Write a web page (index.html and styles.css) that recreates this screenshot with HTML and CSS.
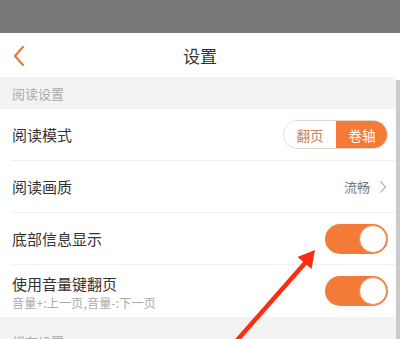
FILE: index.html
```html
<!DOCTYPE html>
<html lang="zh">
<head>
<meta charset="utf-8">
<link rel="stylesheet" href="styles.css">
</head>
<body>
<div class="page">
  <div class="status"></div>
  <div class="header">
    <svg class="back" width="14" height="22" viewBox="0 0 14 22"><polyline points="11,2 3,11 11,20" fill="none" stroke="#e07b39" stroke-width="2.2" stroke-linecap="round" stroke-linejoin="round"/></svg>
    <div class="title">设置</div>
  </div>
  <div class="main">
    <div class="content">
      <div class="section">阅读设置</div>
      <div class="list">
        <div class="row"><div class="row-inner">
          <span class="label">阅读模式</span>
          <div class="seg"><span class="seg-off">翻页</span><span class="seg-on">卷轴</span></div>
        </div></div>
        <div class="row"><div class="row-inner">
          <span class="label">阅读画质</span>
          <div class="value">流畅<svg class="chev" width="8" height="14" viewBox="0 0 8 14"><polyline points="1.5,1.5 6.5,7 1.5,12.5" fill="none" stroke="#b5b5b5" stroke-width="1.2"/></svg></div>
        </div></div>
        <div class="row"><div class="row-inner">
          <span class="label">底部信息显示</span>
          <div class="toggle"><div class="knob"></div></div>
        </div></div>
        <div class="row tall"><div class="row-inner last">
          <div class="labels"><span class="label">使用音量键翻页</span><span class="sub">音量+:上一页,音量-:下一页</span></div>
          <div class="toggle"><div class="knob"></div></div>
        </div></div>
      </div>
      <div class="section section2">缓存设置</div>
    </div>
    <div class="scrollbar"></div>
  </div>
  <svg class="arrow" width="400" height="339" viewBox="0 0 400 339">
    <line x1="232" y1="346" x2="306" y2="262" stroke="#ff2b12" stroke-width="4.5"/>
    <polygon points="315,250 311.5,269 297.5,257" fill="#ff2b12"/>
  </svg>
</div>
</body>
</html>
```
FILE: styles.css
```css
html, body { margin: 0; padding: 0; }
body {
  width: 400px;
  height: 339px;
  overflow: hidden;
  font-family: "Noto Sans CJK SC", "Noto Sans", sans-serif;
  background: #fff;
}
.page { position: relative; width: 400px; height: 339px; overflow: hidden; }
.status { height: 33px; background: #787878; }
.header {
  height: 44px;
  display: flex;
  align-items: center;
  justify-content: center;
  position: relative;
  background: #fff;
}
.back { position: absolute; left: 12px; top: 12px; }
.title { font-size: 17px; color: #333; }
.main { display: flex; height: 262px; }
.content { flex: 1; display: flex; flex-direction: column; min-height: 0; }
.scrollbar { width: 4px; background: #cbcbcb; margin-top: 3px; }
.section {
  flex-shrink: 0;
  height: 32px;
  background: #f3f3f3;
  color: #aaa;
  font-size: 13px;
  display: flex;
  align-items: center;
  padding-left: 12px;
}
.section2 {
  flex: 1 1 0;
  min-height: 0;
  overflow: hidden;
  align-items: flex-start;
  padding-top: 17px;
  box-sizing: border-box;
  line-height: 16px;
}
.list { background: #fff; flex-shrink: 0; }
.row { padding-left: 12px; }
.row-inner {
  height: 51px;
  display: flex;
  align-items: center;
  justify-content: space-between;
  padding-right: 8px;
  border-bottom: 1px solid #f0f0f0;
}
.row-inner.last { border-bottom: none; height: 52px; }
.label { font-size: 15px; color: #333; }
.labels { display: flex; flex-direction: column; padding-top: 2px; }
.labels .label { line-height: 20px; }
.sub { font-size: 12px; letter-spacing: 0.2px; color: #aaa; line-height: 16px; margin-top: 1px; }
.seg {
  display: flex;
  height: 29px;
  width: 105px;
  border-radius: 15px;
  overflow: hidden;
  box-sizing: border-box;
  border: 1px solid #e3d5c8;
  font-size: 13.5px;
}
.seg span { flex: 1; display: flex; align-items: center; justify-content: center; }
.seg-off { color: #c8814f; background: #fff; }
.seg-on { color: #fff; background: #f67a37; margin: -1px -1px -1px 0; }
.value { display: flex; align-items: center; gap: 9px; font-size: 13px; color: #777; }
.chev { margin-right: 1px; }
.toggle {
  width: 63px;
  height: 30px;
  border-radius: 15px;
  background: #f47b37;
  position: relative;
}
.knob {
  position: absolute;
  right: 1px;
  top: 1px;
  width: 26px;
  height: 26px;
  border-radius: 50%;
  background: #fff;
  border: 1px solid #e8925c;
}
.arrow { position: absolute; left: 0; top: 0; pointer-events: none; }
```
